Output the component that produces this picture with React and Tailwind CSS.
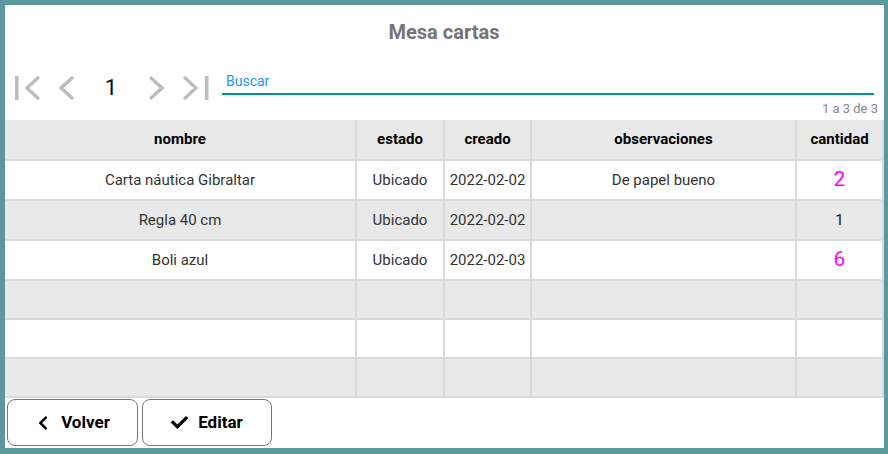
import React from 'react';
import { FaChevronLeft, FaCheck } from 'react-icons/fa';

const rows = [
    { nombre: 'Carta náutica Gibraltar', estado: 'Ubicado', creado: '2022-02-02', observaciones: 'De papel bueno', cantidad: 2 },
    { nombre: 'Regla 40 cm', estado: 'Ubicado', creado: '2022-02-02', observaciones: '', cantidad: 1 },
    { nombre: 'Boli azul', estado: 'Ubicado', creado: '2022-02-03', observaciones: '', cantidad: 6 },
    null,
    null,
    null,
];

// cantidad > 1 se resalta en magenta
const Cantidad = ({ value }) => {
    if (value == null) return null;
    if (value > 1) return <span className="text-[21px] text-[#ff00ff]">{value}</span>;
    return <span className="text-[#111]">{value}</span>;
};

const App = () => {
    return (
        <div className="h-[454px] w-[888px] bg-[#5b9a9c] pl-[5px] pt-[5px] font-['Roboto',sans-serif]">
            <div className="flex h-[443px] w-[879px] flex-col bg-white pr-[1px]">
                <h1 className="pt-[16px] text-center text-[20px] font-bold leading-[22px] text-[#757575]">Mesa cartas</h1>

                {/* paginacion + buscar */}
                <div className="mt-[29px] flex h-[32px] items-start">
                    <div className="flex h-[32px] items-center">
                        <svg width="28" height="26" viewBox="0 0 28 26" className="ml-[8px]">
                            <rect x="2" y="1" width="3.5" height="24" fill="#bdbdbd" />
                            <polyline points="26,2 14,13 26,24" fill="none" stroke="#bdbdbd" strokeWidth="3.5" />
                        </svg>
                        <svg width="22" height="26" viewBox="0 0 22 26" className="ml-[15px]">
                            <polyline points="17,2 5,13 17,24" fill="none" stroke="#bdbdbd" strokeWidth="3.5" />
                        </svg>
                        <span className="ml-[23px] w-[20px] text-center text-[22px] leading-[26px] text-black">1</span>
                        <svg width="22" height="26" viewBox="0 0 22 26" className="ml-[24px]">
                            <polyline points="5,2 17,13 5,24" fill="none" stroke="#bdbdbd" strokeWidth="3.5" />
                        </svg>
                        <svg width="30" height="26" viewBox="0 0 30 26" className="ml-[14px]">
                            <polyline points="3,2 15,13 3,24" fill="none" stroke="#bdbdbd" strokeWidth="3.5" />
                            <rect x="24" y="1" width="3.5" height="24" fill="#bdbdbd" />
                        </svg>
                    </div>
                    <div className="ml-[11px] mr-[9px] mt-[1px] h-[22px] flex-1 border-b-2 border-[#009688] pl-[4px] text-[14px] leading-[16px] text-[#2196f3]">
                        Buscar
                    </div>
                </div>

                <div className="-mt-[2px] h-[18px] pr-[5px] text-right text-[13px] leading-[14px] text-[#888]">1 a 3 de 3</div>

                <table className="w-[878px] table-fixed border-collapse text-[15px] text-[#333]">
                    <colgroup>
                        <col className="w-[351px]" />
                        <col className="w-[88px]" />
                        <col className="w-[87px]" />
                        <col className="w-[265px]" />
                        <col className="w-[87px]" />
                    </colgroup>
                    <thead>
                        <tr className="h-[40px] bg-[#e9e9e9]">
                            {['nombre', 'estado', 'creado', 'observaciones', 'cantidad'].map((h) => (
                                <th key={h} className="border-2 border-t-0 border-[#dadada] first:border-l-0 font-bold text-black">
                                    {h}
                                </th>
                            ))}
                        </tr>
                    </thead>
                    <tbody>
                        {rows.map((r, i) => (
                            <tr
                                key={i}
                                className={`${r ? 'h-[40px]' : 'h-[39px]'} ${i % 2 === 0 ? 'bg-white' : 'bg-[#e9e9e9]'}`}
                            >
                                <td className="border-2 border-l-0 border-[#dadada] text-center">{r?.nombre}</td>
                                <td className="border-2 border-[#dadada] text-center">{r?.estado}</td>
                                <td className="border-2 border-[#dadada] text-center">{r?.creado}</td>
                                <td className="border-2 border-[#dadada] text-center">{r?.observaciones}</td>
                                <td className="border-2 border-[#dadada] text-center">
                                    <Cantidad value={r?.cantidad} />
                                </td>
                            </tr>
                        ))}
                    </tbody>
                </table>

                <div className="ml-[2px] mt-[1px] flex gap-[4px]">
                    <button className="flex h-[47px] w-[131px] items-center justify-center gap-[10px] rounded-[8px] border border-[#777] bg-white text-[17px] font-bold text-black">
                        <FaChevronLeft className="text-[16px]" />
                        Volver
                    </button>
                    <button className="flex h-[47px] w-[130px] items-center justify-center gap-[10px] rounded-[8px] border border-[#777] bg-white text-[17px] font-bold text-black">
                        <FaCheck className="text-[17px]" />
                        Editar
                    </button>
                </div>
            </div>
        </div>
    );
};

export default App;
